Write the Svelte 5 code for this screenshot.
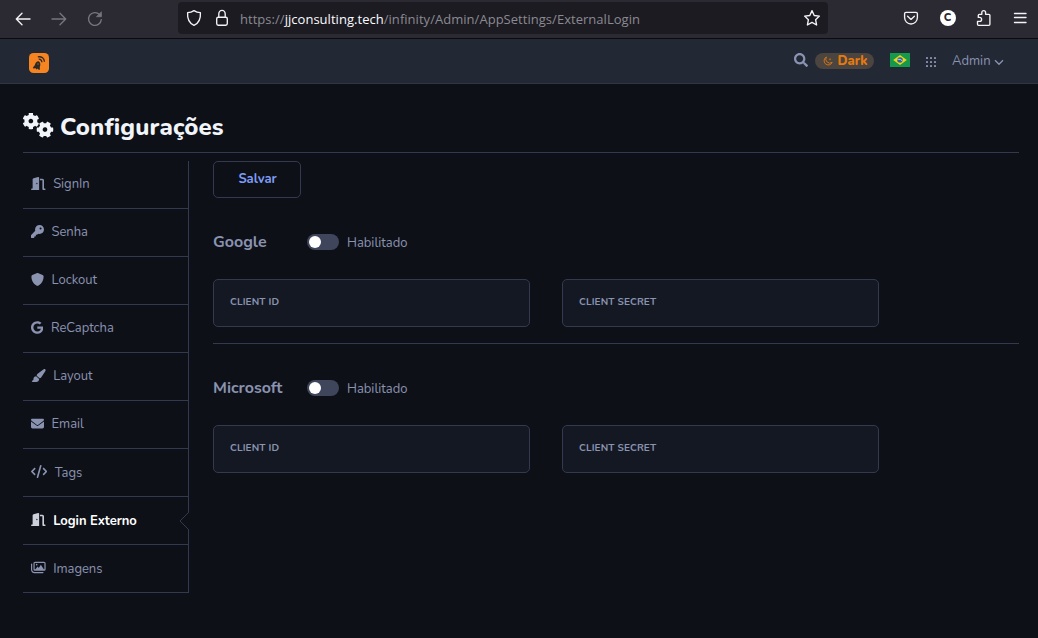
<script>
  const icons = {
    door: { w: 576, d: 'M320 32c0-9.9-4.5-19.2-12.3-25.2S289.8-1.4 280.2 1l-179.9 45C79 51.3 64 70.5 64 92.5V448H32c-17.7 0-32 14.3-32 32s14.3 32 32 32H96 288h32V480 32zM256 256c0 17.7-10.7 32-24 32s-24-14.3-24-32s10.7-32 24-32s24 14.3 24 32zm96-128h96V480c0 17.7 14.3 32 32 32h64c17.7 0 32-14.3 32-32s-14.3-32-32-32H512V128c0-35.3-28.7-64-64-64H352v64z' },
    key: { w: 512, d: 'M336 352c97.2 0 176-78.8 176-176S433.2 0 336 0S160 78.8 160 176c0 18.7 2.9 36.8 8.3 53.7L7 391c-4.5 4.5-7 10.6-7 17v80c0 13.3 10.7 24 24 24h80c13.3 0 24-10.7 24-24V448h40c13.3 0 24-10.7 24-24V384h40c6.4 0 12.5-2.5 17-7l33.3-33.3c16.9 5.4 35 8.3 53.7 8.3zM376 96a40 40 0 1 1 0 80 40 40 0 1 1 0-80z' },
    shield: { w: 512, d: 'M256 0c4.6 0 9.2 1 13.4 2.9L457.7 82.8c22 9.3 38.4 31 38.3 57.2c-.5 99.2-41.3 280.7-213.6 363.2c-16.7 8-36.1 8-52.8 0C57.3 420.7 16.5 239.2 16 140c-.1-26.2 16.3-47.9 38.3-57.2L242.7 2.9C246.8 1 251.4 0 256 0z' },
    google: { w: 488, d: 'M488 261.8C488 403.3 391.1 504 248 504 110.8 504 0 393.2 0 256S110.8 8 248 8c66.8 0 123 24.5 166.3 64.9l-67.5 64.9C258.5 52.6 94.3 116.6 94.3 256c0 86.5 69.1 156.6 153.7 156.6 98.2 0 135-70.4 140.8-106.9H248v-85.3h236.1c2.3 12.7 3.9 24.9 3.9 41.4z' },
    brush: { w: 576, d: 'M339.3 367.1c27.3-3.9 51.9-19.4 67.2-42.9L568.2 74.1c12.6-19.5 9.4-45.3-7.6-61.2S517.7-4.4 499.1 9.6L262.4 187.2c-24 18-38.2 46.1-38.4 76.1L339.3 367.1zm-19.6 25.4l-116-104.4C143.9 290.3 96 339.6 96 400c0 3.9 .2 7.8 .6 11.6C98.4 429.1 86.4 448 68.8 448H64c-17.7 0-32 14.3-32 32s14.3 32 32 32H208c61.9 0 112-50.1 112-112c0-2.5-.1-5-.2-7.5z' },
    mail: { w: 512, d: 'M48 64C21.5 64 0 85.5 0 112c0 15.1 7.1 29.3 19.2 38.4L236.8 313.6c11.4 8.5 27 8.5 38.4 0L492.8 150.4c12.1-9.1 19.2-23.3 19.2-38.4c0-26.5-21.5-48-48-48H48zM0 176V384c0 35.3 28.7 64 64 64H448c35.3 0 64-28.7 64-64V176L294.4 339.2c-22.8 17.1-54 17.1-76.8 0L0 176z' },
    code: { w: 640, d: 'M392.8 1.2c-17-4.9-34.7 5-39.6 22l-128 448c-4.9 17 5 34.7 22 39.6s34.7-5 39.6-22l128-448c4.9-17-5-34.7-22-39.6zm80.6 120.1c-12.5 12.5-12.5 32.8 0 45.3L562.7 256l-89.4 89.4c-12.5 12.5-12.5 32.8 0 45.3s32.8 12.5 45.3 0l112-112c12.5-12.5 12.5-32.8 0-45.3l-112-112c-12.5-12.5-32.8-12.5-45.3 0zm-306.7 0c-12.5-12.5-32.8-12.5-45.3 0l-112 112c-12.5 12.5-12.5 32.8 0 45.3l112 112c12.5 12.5 32.8 12.5 45.3 0s12.5-32.8 0-45.3L77.3 256l89.4-89.4c12.5-12.5 12.5-32.8 0-45.3z' },
    images: { w: 576, d: 'M160 32h352c35 0 64 29 64 64v224c0 35-29 64-64 64H160c-35 0-64-29-64-64V96c0-35 29-64 64-64zm0 48c-9 0-16 7-16 16v224h384V96c0-9-7-16-16-16zM224 112a32 32 0 1 1 0 64 32 32 0 1 1 0-64zM176 320l84-104 46 56 82-124 116 172zM24 96c13 0 24 11 24 24v224c0 49 39 88 88 88h336c13 0 24 11 24 24s-11 24-24 24H136C61 480 0 419 0 344V120c0-13 11-24 24-24z' }
  };
  const gear = 'M487.4 315.7l-42.6-24.6c4.3-23.2 4.3-47 0-70.2l42.6-24.6c4.9-2.8 7.1-8.6 5.5-14-11.1-35.6-30-67.8-54.7-94.6-3.8-4.1-10-5.1-14.8-2.3L380.8 110c-17.9-15.4-38.5-27.3-60.8-35.1V25.8c0-5.6-3.9-10.5-9.4-11.7-36.7-8.2-74.3-7.8-109.2 0-5.5 1.2-9.4 6.1-9.4 11.7V75c-22.2 7.9-42.8 19.8-60.8 35.1L88.7 85.5c-4.9-2.8-11-1.9-14.8 2.3-24.7 26.7-43.6 58.9-54.7 94.6-1.7 5.4.6 11.2 5.5 14L67.3 221c-4.3 23.2-4.3 47 0 70.2l-42.6 24.6c-4.9 2.8-7.1 8.6-5.5 14 11.1 35.6 30 67.8 54.7 94.6 3.8 4.1 10 5.1 14.8 2.3l42.6-24.6c17.9 15.4 38.5 27.3 60.8 35.1v49.2c0 5.6 3.9 10.5 9.4 11.7 36.7 8.2 74.3 7.8 109.2 0 5.5-1.2 9.4-6.1 9.4-11.7v-49.2c22.2-7.9 42.8-19.8 60.8-35.1l42.6 24.6c4.9 2.8 11 1.9 14.8-2.3 24.7-26.7 43.6-58.9 54.7-94.6 1.5-5.5-.7-11.3-5.6-14.1zM256 326c-38.6 0-70-31.4-70-70s31.4-70 70-70 70 31.4 70 70-31.4 70-70 70z';
  const items = [
    { icon: 'door', label: 'SignIn' },
    { icon: 'key', label: 'Senha' },
    { icon: 'shield', label: 'Lockout' },
    { icon: 'google', label: 'ReCaptcha' },
    { icon: 'brush', label: 'Layout' },
    { icon: 'mail', label: 'Email' },
    { icon: 'code', label: 'Tags' },
    { icon: 'door', label: 'Login Externo', active: true },
    { icon: 'images', label: 'Imagens' }
  ];
  const providers = ['Google', 'Microsoft'];
</script>

<div class="window">
  <div class="chrome">
    <div class="history">
      <svg width="16" height="16" viewBox="0 0 16 16" class="stroke"><path d="M15 8H1.5M7 2.3L1.3 8L7 13.7" /></svg>
      <svg width="16" height="16" viewBox="0 0 16 16" class="stroke dim"><path d="M1 8h13.5M9 2.3L14.7 8L9 13.7" /></svg>
      <svg width="16" height="16" viewBox="0 0 16 16" class="stroke dim"><path d="M14.3 8.6A6.4 6.4 0 1 1 12.6 3.6" /><path d="M14.4 1.2v4.5H9.8z" fill="#77767e" stroke-width=".8" /></svg>
    </div>
    <div class="address">
      <svg width="16" height="18" viewBox="0 0 16 18" class="stroke"><path d="M8 1.6C6 3 4 3.6 1.6 3.7C1.2 9.6 3.3 14.2 8 16.3C12.7 14.2 14.8 9.6 14.4 3.7C12 3.6 10 3 8 1.6z" /></svg>
      <svg width="14" height="18" viewBox="0 0 14 18" class="stroke lock"><rect x="1.7" y="8.2" width="10.6" height="8" rx="1.6" /><path d="M3.8 8V5a3.2 3.6 0 0 1 6.4 0v3" /></svg>
      <span class="url">https://<b>jjconsulting.tech</b>/infinity/Admin/AppSettings/ExternalLogin</span>
      <svg width="18" height="18" viewBox="0 0 18 18" class="stroke star"><path d="M9 1.6L11.2 6.5L16.4 7.1L12.6 10.7L13.6 16L9 13.4L4.4 16L5.4 10.7L1.6 7.1L6.8 6.5z" /></svg>
    </div>
    <div class="tools">
      <svg width="16" height="16" viewBox="0 0 16 16" class="stroke"><path d="M3 2.3h10a1.4 1.4 0 0 1 1.4 1.4V7.6a6.4 6.4 0 0 1-12.8 0V3.7A1.4 1.4 0 0 1 3 2.3zM4.6 6.3L8 9.4L11.4 6.3" /></svg>
      <span class="account">C</span>
      <svg width="16" height="18" viewBox="0 0 16 18" class="stroke"><path d="M2.5 16.3h10.4a1 1 0 0 0 1-1V6.3a1 1 0 0 0-1-1H9.6V3.5a1.9 1.9 0 0 0-3.8 0V5.3H3.3a1 1 0 0 0-1 1V8.4H3.6a1.9 1.9 0 0 1 0 4H1.5v2.9a1 1 0 0 0 1 1z" /></svg>
      <svg width="14" height="14" viewBox="0 0 14 14" class="stroke"><path d="M1.5 2.5h11.5M1.5 6.5h11.5M1.5 11.5h11.5" /></svg>
    </div>
  </div>

  <header>
    <svg class="logo" width="20" height="20" viewBox="0 0 20 20">
      <rect width="20" height="20" rx="4.5" fill="#f68420" />
      <path d="M9.7 8.2C7.2 8.3 6.3 10.1 5.8 12.2L3.9 14.4L4.4 15.4L6.8 15.3L7.2 16.4L9 15.6L9.7 17L10.9 16.6L10.8 13.8C11.9 11.6 11.3 9.2 9.7 8.2z" fill="#2c2927" />
      <circle cx="9" cy="11" r=".8" fill="#a95f24" />
      <path d="M9.7 6.2C11.7 6 12.8 7.4 12.9 9.3M8.8 3.9C12.8 3.2 15.4 5.5 15.4 8.7" fill="none" stroke="#2c2927" stroke-width="1.3" />
    </svg>
    <div class="actions">
      <svg class="search" width="14" height="14" viewBox="0 0 512 512" fill="currentColor"><path d="M505 442.7L405.3 343c-4.5-4.5-10.6-7-17-7H372c27.6-35.3 44-79.7 44-128C416 93.1 322.9 0 208 0S0 93.1 0 208s93.1 208 208 208c48.3 0 92.7-16.4 128-44v16.3c0 6.4 2.5 12.5 7 17l99.7 99.7c9.4 9.4 24.6 9.4 33.9 0l28.3-28.3c9.4-9.4 9.4-24.6.1-34zM208 336c-70.7 0-128-57.2-128-128 0-70.7 57.2-128 128-128 70.7 0 128 57.2 128 128 0 70.7-57.2 128-128 128z" /></svg>
      <span class="theme">
        <svg width="10" height="10" viewBox="0 0 10 10"><path d="M3.4 1A4.2 4.2 0 1 0 9.2 6.3A4 4 0 0 1 3.4 1z" fill="none" stroke="#df7814" stroke-width=".9" stroke-linejoin="round" /><path d="M7 2.3v2M6 3.3h2" stroke="#df7814" stroke-width=".6" /></svg>
        <span>Dark</span>
      </span>
      <svg class="flag" width="20" height="14" viewBox="0 0 20 14"><rect width="20" height="14" fill="#159a4b" /><path d="M10 2L16.8 7L10 12L3.2 7z" fill="#f5d414" /><circle cx="10" cy="7" r="2.8" fill="#2867a6" /><path d="M7.4 6.2Q10.6 5.8 12.6 8" fill="none" stroke="#dfe8f3" stroke-width=".8" /></svg>
      <svg class="grid" width="10" height="10" viewBox="0 0 10 10" fill="currentColor">
        {#each [0, 4, 8] as y}{#each [0, 4, 8] as x}<rect {x} {y} width="2" height="2" rx=".4" />{/each}{/each}
      </svg>
      <span class="user">Admin</span>
      <svg class="chevron" width="10" height="7" viewBox="0 0 10 7"><path d="M1 1.3L5 5.3L9 1.3" fill="none" stroke="currentColor" stroke-width="1.3" /></svg>
    </div>
  </header>

  <main>
    <h1>
      <svg width="31" height="26" viewBox="0 0 31 26" fill="currentColor">
        <path d={gear} transform="translate(-.7 -.6) scale(.0335)" />
        <path d={gear} transform="translate(13.4 8) scale(.0335) rotate(30 256 256)" />
      </svg>
      <span>Configurações</span>
    </h1>
    <div class="columns">
      <nav>
        {#each items as item}
          <a class:active={item.active} class={item.icon}>
            <svg height="13" width={(13 * icons[item.icon].w) / 512} viewBox="0 0 {icons[item.icon].w} 512" fill="currentColor"><path d={icons[item.icon].d} fill-rule={item.icon === 'images' ? 'evenodd' : 'nonzero'} /></svg>
            <span>{item.label}</span>
            {#if item.active}
              <svg class="notch" width="10" height="18" viewBox="0 0 10 18"><rect x="8.5" y="1" width="1.5" height="16" fill="#0e1018" /><path d="M9.5 .5L1 9L9.5 17.5" fill="#0e1018" stroke="#343950" /></svg>
            {/if}
          </a>
        {/each}
      </nav>
      <section class="content">
        <button>Salvar</button>
        {#each providers as name}
          <section class="provider">
            <div class="title">
              <h2>{name}</h2>
              <i class="switch"></i>
              <span class="state">Habilitado</span>
            </div>
            <div class="fields">
              <div class="field">CLIENT ID</div>
              <div class="field">CLIENT SECRET</div>
            </div>
          </section>
        {/each}
      </section>
    </div>
  </main>
</div>

<style>
  :global(body) { margin: 0; background: #0e1018; }
  * { box-sizing: border-box; }
  svg { display: block; flex: none; }
  .window {
    width: 1038px; height: 638px; overflow: hidden;
    background: #0e1018; color: #8a93b0;
    font: 13px/20px Nunito, Lato, sans-serif;
  }
  .chrome { display: flex; height: 39px; background: #2b2a33; border-bottom: 1px solid #0b0b0f; }
  .stroke { fill: none; stroke: #f4f4f6; stroke-width: 1.35; stroke-linecap: round; stroke-linejoin: round; }
  .dim { stroke: #77767e; }
  .history { display: flex; gap: 20px; width: 178px; padding: 11px 0 0 15px; }
  .address { display: flex; width: 650px; height: 32px; margin-top: 2px; padding: 7px 7px 0 8px; border-radius: 4px; background: #1c1b22; }
  .lock { margin-left: 13px; }
  .url { margin-left: 11px; font: 13px/20px "Segoe UI", "Open Sans", sans-serif; color: #8b8a91; letter-spacing: .035px; white-space: nowrap; }
  .url b { font-weight: 400; color: #fbfbfe; }
  .star { margin-left: auto; }
  .tools { display: flex; align-items: center; gap: 20.5px; height: 36px; margin-left: 75px; }
  .account { display: grid; place-items: center; width: 16px; height: 16px; border-radius: 50%; background: #fff; color: #2b2a33; font: 800 11px/16px Nunito, Inter, sans-serif; }

  header { display: flex; height: 45px; background: #222834; border-bottom: 1px solid #303541; }
  .logo { margin: 14px 0 0 29px; }
  .actions { display: flex; margin-left: 745px; padding-top: 14px; color: #8b93b3; }
  .search { margin-top: 0; }
  .theme { display: flex; align-items: center; gap: 4.5px; width: 59px; height: 16px; margin-left: 7px; padding-left: 8px; border-radius: 8px; background: #4b443f; color: #e57b10; font-weight: 800; font-size: 13px; line-height: 16px; }
  .flag { margin-left: 16px; }
  .grid { margin: 4px 0 0 16px; }
  .user { margin: -2px 0 0 16px; line-height: 20px; }
  .chevron { margin: 6px 0 0 3px; }

  main { padding: 27px 19px 0 23px; }
  h1 { display: flex; gap: 6px; height: 42px; margin: 0; border-bottom: 1px solid #343950; color: #f1f4f9; font-size: 24px; line-height: 32px; font-weight: 800; letter-spacing: .14px; }
  h1 svg { margin-top: 2px; }
  .columns { display: flex; padding-top: 8px; }
  nav { width: 166px; border-right: 1px solid #343950; }
  a { position: relative; display: flex; align-items: center; gap: 7.5px; height: 48px; padding: 0 0 2px 8px; border-bottom: 1px solid #343950; }
  a span { padding-top: 1px; letter-spacing: -.03px; }
  a.code span, a.active span, a.images span { padding-top: 2px; }
  a.active { color: #fff; font-weight: 700; }
  a.active > svg:first-child { color: #ccd0db; }
  .notch { position: absolute; right: -1px; top: 15px; }
  .content { flex: 1; padding-left: 24px; }
  button { display: block; width: 88px; height: 37px; padding: 0 0 1px 1px; border: 1px solid #343950; border-radius: 5px; background: transparent; color: #7d9cf5; font: inherit; font-weight: 700; }
  .provider { height: 146px; padding-top: 34px; border-bottom: 1px solid #343950; }
  .provider:last-child { border-bottom: 0; }
  .title { display: flex; height: 20px; align-items: center; }
  .state { padding-top: 2px; }
  h2 { width: 94px; margin: 0; font-size: 16px; line-height: 20px; font-weight: 700; }
  .switch { width: 32px; height: 16px; margin-right: 8px; padding: 2px; border-radius: 8px; background: #3f465b; }
  .switch::before { content: ''; display: block; width: 12px; height: 12px; border-radius: 50%; background: #fff; }
  .fields { display: flex; gap: 32px; margin-top: 27px; }
  .field { width: 317px; height: 48px; padding: 12px 16px; border: 1px solid #343950; border-radius: 5px; background: #141823; font-size: 10px; line-height: 20px; font-weight: 700; letter-spacing: .12px; }
</style>
